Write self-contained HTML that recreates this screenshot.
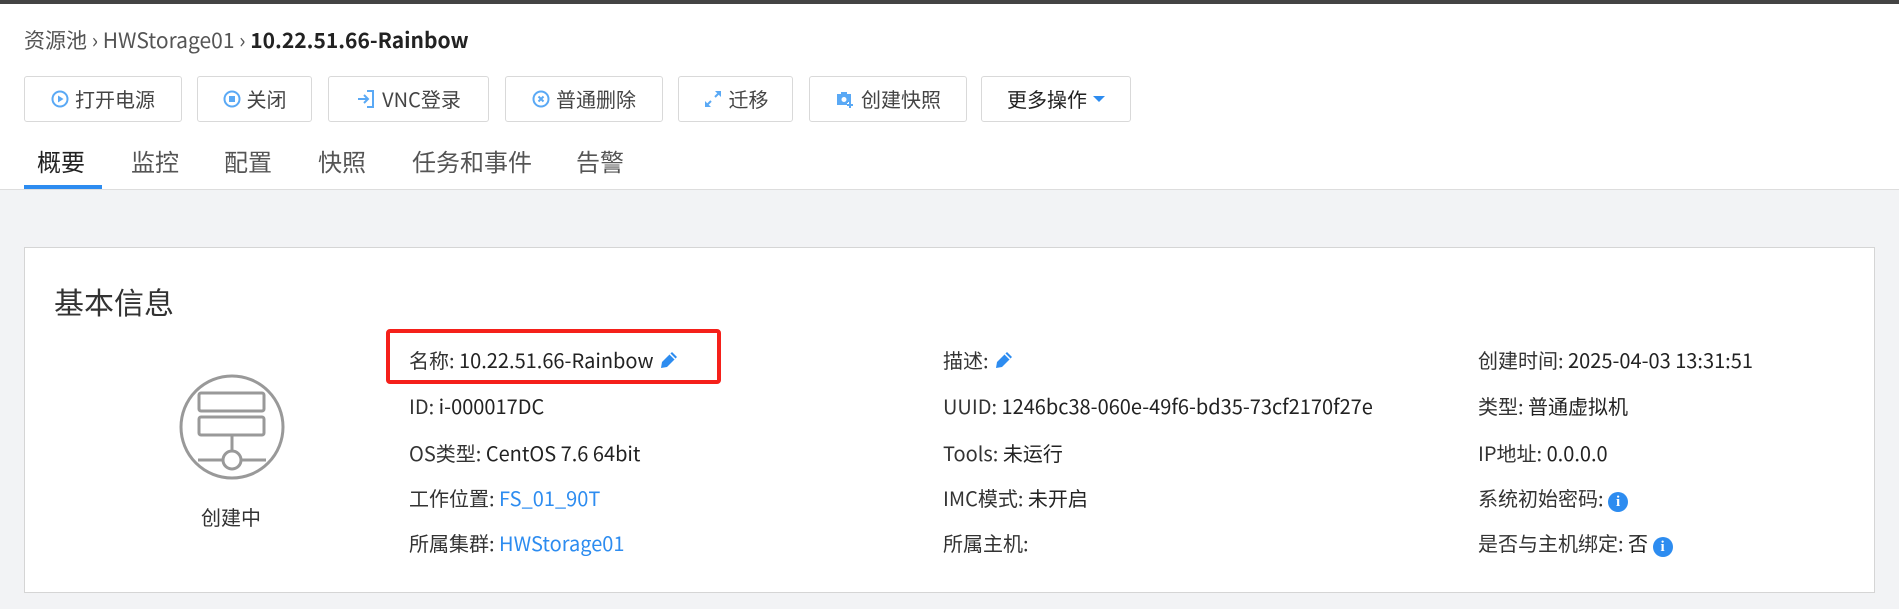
<!DOCTYPE html>
<html><head><meta charset="utf-8"><style>
*{box-sizing:border-box;margin:0;padding:0}
body{width:1899px;height:609px;overflow:hidden;background:#f2f3f5;font-family:"Noto Sans CJK SC","Liberation Sans",sans-serif;color:#333;position:relative}
.top{position:absolute;left:0;top:0;width:1899px;height:190px;background:#fff;border-bottom:1px solid #ddd}
.bar{position:absolute;left:0;top:0;width:1899px;height:4px;background:#444}
.bc{position:absolute;left:24px;top:25px;font-size:21px;line-height:30px;color:#555;white-space:nowrap}
.bc b{color:#222}
.btn{position:absolute;top:76px;height:46px;border:1px solid #d9d9d9;border-radius:3px;background:#fff;font-size:20px;color:#444;display:flex;align-items:center;justify-content:center;gap:6px;line-height:28px}
.btn svg{flex:none}
.tab{position:absolute;top:144px;font-size:24px;line-height:34px;color:#555}
.ul{position:absolute;left:24px;top:185px;width:78px;height:4px;background:#2d8cf0}
.card{position:absolute;left:24px;top:247px;width:1851px;height:346px;background:#fff;border:1px solid #d5d5d5}
.t{position:absolute;font-size:20px;color:#333;white-space:nowrap;line-height:26px}
.t span{color:#222}
.t a{color:#2d8cf0;text-decoration:none}
.info{display:inline-block;width:20px;height:20px;border-radius:50%;background:#2d8cf0;color:#fff !important;font-size:15px;font-weight:bold;text-align:center;line-height:20px;vertical-align:0;font-family:"Liberation Serif",serif}
</style></head><body>
<div class="top"></div><div class="bar"></div>
<div class="bc">资源池 &#8250; HWStorage01 &#8250; <b>10.22.51.66-Rainbow</b></div>

<div class="btn" style="left:24px;width:158px"><svg width="18" height="18"><circle cx="9" cy="9" r="7.5" fill="none" stroke="#5aa9f5" stroke-width="2"/><path d="M7 5.5v7l5.5-3.5z" fill="#5aa9f5"/></svg>打开电源</div>
<div class="btn" style="left:197px;width:115px"><svg width="18" height="18"><circle cx="9" cy="9" r="7.5" fill="none" stroke="#5aa9f5" stroke-width="2"/><rect x="6" y="6" width="6" height="6" fill="#5aa9f5"/></svg>关闭</div>
<div class="btn" style="left:328px;width:161px"><svg width="20" height="20"><path d="M11 2h6v16h-6" fill="none" stroke="#5aa9f5" stroke-width="2"/><path d="M2 10h10M8 6l4 4-4 4" fill="none" stroke="#5aa9f5" stroke-width="2"/></svg>VNC登录</div>
<div class="btn" style="left:505px;width:158px"><svg width="18" height="18"><circle cx="9" cy="9" r="7.5" fill="none" stroke="#5aa9f5" stroke-width="2"/><path d="M6.5 6.5l5 5M11.5 6.5l-5 5" stroke="#5aa9f5" stroke-width="2"/></svg>普通删除</div>
<div class="btn" style="left:678px;width:115px"><svg width="20" height="20"><path d="M3 17L8 12M17 3l-5 5" stroke="#5aa9f5" stroke-width="2"/><path d="M2 12v6h6zM18 8V2h-6z" fill="#5aa9f5"/></svg>迁移</div>
<div class="btn" style="left:809px;width:158px"><svg width="20" height="20"><rect x="2" y="5" width="14" height="11" fill="#5aa9f5"/><rect x="6" y="3" width="6" height="3" fill="#5aa9f5"/><circle cx="9" cy="10.5" r="2.5" fill="#fff"/><path d="M15 13v6M12 16h6" stroke="#fff" stroke-width="4"/><path d="M15 13v6M12 16h6" stroke="#5aa9f5" stroke-width="2"/></svg>创建快照</div>
<div class="btn" style="left:981px;width:150px;color:#222">更多操作<svg width="12" height="8"><path d="M0 1h12L6 7z" fill="#2d8cf0"/></svg></div>

<div class="tab" style="left:37px;color:#222">概要</div>
<div class="tab" style="left:131px">监控</div>
<div class="tab" style="left:224px">配置</div>
<div class="tab" style="left:318px">快照</div>
<div class="tab" style="left:412px">任务和事件</div>
<div class="tab" style="left:576px">告警</div>
<div class="ul"></div>

<div class="card"></div>
<div class="t" style="left:54px;top:281px;font-size:30px;line-height:40px;color:#333">基本信息</div>
<svg style="position:absolute;left:178px;top:373px" width="108" height="108" viewBox="0 0 108 108"><circle cx="54" cy="54" r="51" fill="none" stroke="#999" stroke-width="3"/><rect x="21" y="20" width="65" height="18" rx="2" fill="none" stroke="#999" stroke-width="3"/><rect x="21" y="44" width="65" height="18" rx="2" fill="none" stroke="#999" stroke-width="3"/><path d="M54 62v15M20 87h24M64 87h24" stroke="#999" stroke-width="3"/><circle cx="54" cy="87" r="9" fill="none" stroke="#999" stroke-width="3"/></svg>
<div class="t" style="left:201px;top:504px">创建中</div>

<div style="position:absolute;left:386px;top:329px;width:335px;height:55px;border:4px solid #f5201a;border-radius:4px"></div>
<div class="t" style="left:409px;top:347px">名称: <span>10.22.51.66-Rainbow</span> <svg width="22" height="22" style="vertical-align:-3px"><path d="M3 19l1-6 10-10 5 5-10 10z" fill="#2d8cf0"/><path d="M12 5l5 5" stroke="#fff" stroke-width="1.5"/></svg></div>
<div class="t" style="left:409px;top:393px">ID: <span>i-000017DC</span></div>
<div class="t" style="left:409px;top:440px">OS类型: <span>CentOS 7.6 64bit</span></div>
<div class="t" style="left:409px;top:485px">工作位置: <a>FS_01_90T</a></div>
<div class="t" style="left:409px;top:530px">所属集群: <a>HWStorage01</a></div>

<div class="t" style="left:943px;top:347px">描述: <svg width="22" height="22" style="vertical-align:-3px"><path d="M3 19l1-6 10-10 5 5-10 10z" fill="#2d8cf0"/><path d="M12 5l5 5" stroke="#fff" stroke-width="1.5"/></svg></div>
<div class="t" style="left:943px;top:393px">UUID: <span>1246bc38-060e-49f6-bd35-73cf2170f27e</span></div>
<div class="t" style="left:943px;top:440px">Tools: <span>未运行</span></div>
<div class="t" style="left:943px;top:485px">IMC模式: <span>未开启</span></div>
<div class="t" style="left:943px;top:530px">所属主机:</div>

<div class="t" style="left:1478px;top:347px">创建时间: <span>2025-04-03 13:31:51</span></div>
<div class="t" style="left:1478px;top:393px">类型: <span>普通虚拟机</span></div>
<div class="t" style="left:1478px;top:440px">IP地址: <span>0.0.0.0</span></div>
<div class="t" style="left:1478px;top:485px">系统初始密码: <span class="info">i</span></div>
<div class="t" style="left:1478px;top:530px">是否与主机绑定: <span>否</span> <span class="info">i</span></div>
</body></html>
